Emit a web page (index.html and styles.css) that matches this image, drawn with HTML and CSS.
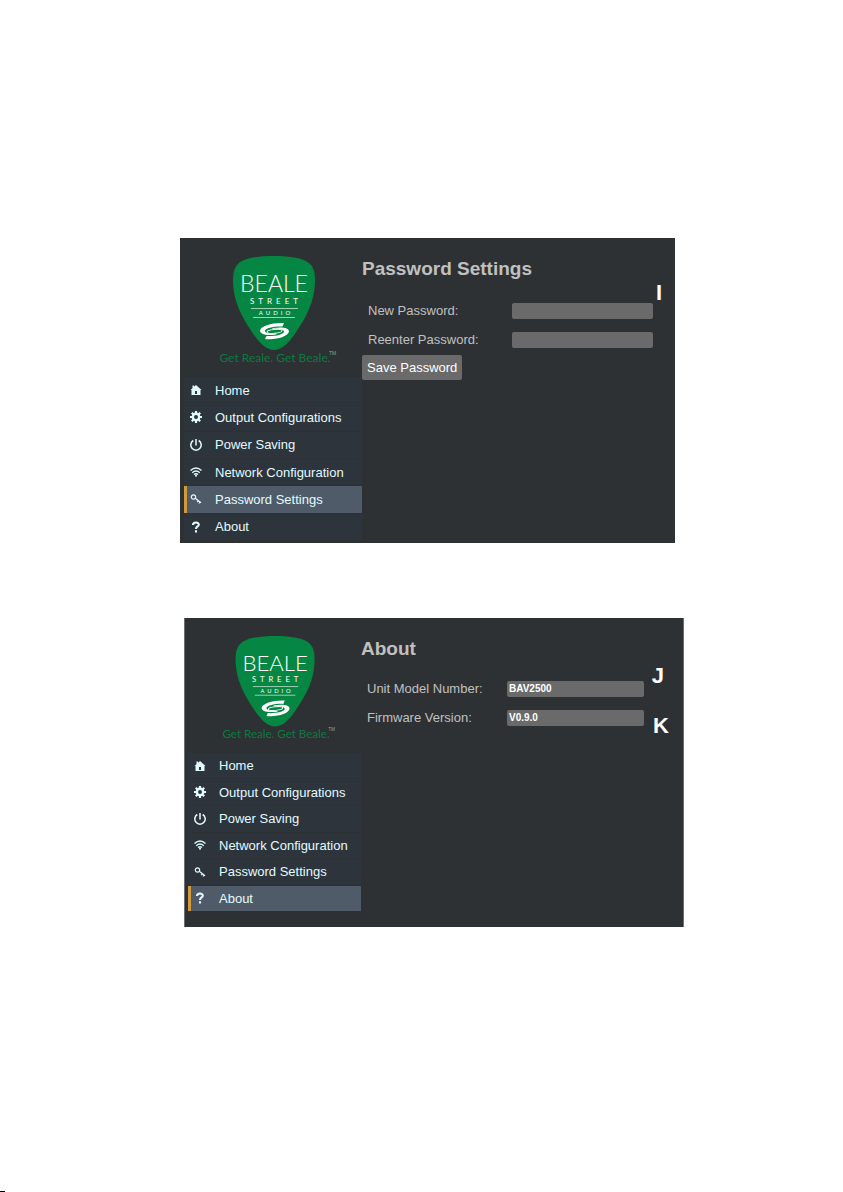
FILE: index.html
```html
<!DOCTYPE html>
<html lang="en">
<head>
  <meta charset="UTF-8">
  <meta name="viewport" content="width=device-width, initial-scale=1.0">
  <title>Beale Street Audio</title>
  <link rel="stylesheet" href="styles.css">
</head>
<body>
  <!-- shared menu icons and logo shapes -->
  <svg class="sprite" aria-hidden="true">
    <symbol id="pick" viewBox="0 0 120 112">
      <path class="pick" d="M57 2C41 2 27 4 21 10C17 14 16 20 16 26C16 42 21 55 28 67C37 82 46 96 57 96C68 96 77 82 86 67C93 55 98 42 98 26C98 20 97 14 93 10C87 4 73 2 57 2Z"/>
      <path class="logo-rule" d="M34 54.500H81M36 63.500H78"/>
      <path class="swoosh" d="M67 69C55 68.500 44 72 43 76.500C43 80 49 82 59 80.500L60 79.500C53 80.500 47.500 79 48 76.500C49 74 57 72 65.500 72.500Z"/>
      <path class="swoosh" d="M48 85C60 86 71 82.500 72 77.500C72 74 66 72.500 56 74L55 75C62 74 67.500 75.500 67 78C66 80.500 58 82.500 49.500 82Z"/>
      <ellipse class="swoosh-ring" cx="57.500" cy="77.300" rx="7.500" ry="1.900" transform="rotate(-5 57.500 77.300)"/>
    </symbol>
    <symbol id="home" viewBox="0 0 12 12">
      <path fill="currentColor" fill-rule="evenodd" d="M6 1L11.500 6H10.500V11H1.500V6H.500L2.500 4.200V1.500H4V2.800ZM5 7V10H7V7Z"/>
    </symbol>
    <symbol id="gear" viewBox="0 0 12 12">
      <circle cx="6" cy="6" r="3.200" fill="none" stroke="currentColor" stroke-width="2.400"/>
      <path stroke="currentColor" stroke-width="2.200" d="M6 0V2.500M6 9.500V12M0 6H2.500M9.500 6H12M1.800 1.800L3.500 3.500M8.500 8.500L10.200 10.200M10.200 1.800L8.500 3.500M3.500 8.500L1.800 10.200"/>
    </symbol>
    <symbol id="power" viewBox="0 0 12 12">
      <path fill="none" stroke="currentColor" stroke-width="1.500" d="M3.300 1.500A5.200 5.200 0 1 0 8.700 1.500M6 0V6.500"/>
    </symbol>
    <symbol id="wifi" viewBox="0 0 12 12">
      <path fill="none" stroke="currentColor" stroke-width="1.400" d="M.500 4.500Q6 -.300 11.500 4.500M2.200 6.700Q6 3.400 9.800 6.700M4 8.600Q6 6.800 8 8.600"/>
      <circle cx="6" cy="9.800" r="1" fill="currentColor"/>
    </symbol>
    <symbol id="key" viewBox="0 0 12 12">
      <circle cx="3.500" cy="4" r="2.200" fill="none" stroke="currentColor" stroke-width="1.200"/>
      <path fill="none" stroke="currentColor" stroke-width="1.200" d="M5.200 5.200L11 9.800M8.300 7.800L7.200 9.200M10 9L9 10.500"/>
    </symbol>
    <symbol id="help" viewBox="0 0 12 12">
      <path fill="none" stroke="currentColor" stroke-width="2.100" d="M3 4C3 .700 9 .700 8.800 3.700C8.700 5.600 6 5.300 6 8M6 9.300V11.500"/>
    </symbol>
  </svg>

  <main class="page">
    <section class="panel panel-password">
      <div class="sidebar">
        <svg class="logo" viewBox="0 0 120 112" role="img" aria-label="Beale Street Audio">
          <use href="#pick"/>
          <text class="logo-beale" x="57" y="38">BEALE</text>
          <text class="logo-street" x="59" y="50">STREET</text>
          <text class="logo-audio" x="59" y="61">AUDIO</text>
          <text class="logo-tag" x="58" y="108">Get Reale. Get Beale.</text>
          <text class="logo-tm" x="112" y="101">TM</text>
        </svg>
        <nav class="menu">
          <a href="#"><svg><use href="#home"/></svg>Home</a>
          <a href="#"><svg><use href="#gear"/></svg>Output Configurations</a>
          <a href="#"><svg><use href="#power"/></svg>Power Saving</a>
          <a href="#"><svg><use href="#wifi"/></svg>Network Configuration</a>
          <a href="#" class="active"><svg><use href="#key"/></svg>Password Settings</a>
          <a href="#"><svg><use href="#help"/></svg>About</a>
        </nav>
      </div>
      <form class="content">
        <h1>Password Settings</h1>
        <div class="field">
          <label for="new-password">New Password:</label>
          <input type="password" id="new-password">
        </div>
        <div class="field">
          <label for="reenter-password">Reenter Password:</label>
          <input type="password" id="reenter-password">
        </div>
        <button type="button" class="save">Save Password</button>
      </form>
      <span class="callout callout-i">I</span>
    </section>

    <section class="panel panel-about">
      <div class="sidebar">
        <svg class="logo" viewBox="0 0 120 112" role="img" aria-label="Beale Street Audio">
          <use href="#pick"/>
          <text class="logo-beale" x="57" y="38">BEALE</text>
          <text class="logo-street" x="59" y="50">STREET</text>
          <text class="logo-audio" x="59" y="61">AUDIO</text>
          <text class="logo-tag" x="58" y="108">Get Reale. Get Beale.</text>
          <text class="logo-tm" x="112" y="101">TM</text>
        </svg>
        <nav class="menu">
          <a href="#"><svg><use href="#home"/></svg>Home</a>
          <a href="#"><svg><use href="#gear"/></svg>Output Configurations</a>
          <a href="#"><svg><use href="#power"/></svg>Power Saving</a>
          <a href="#"><svg><use href="#wifi"/></svg>Network Configuration</a>
          <a href="#"><svg><use href="#key"/></svg>Password Settings</a>
          <a href="#" class="active"><svg><use href="#help"/></svg>About</a>
        </nav>
      </div>
      <form class="content">
        <h1>About</h1>
        <div class="field">
          <label for="model">Unit Model Number:</label>
          <input type="text" id="model" value="BAV2500" readonly>
        </div>
        <div class="field">
          <label for="firmware">Firmware Version:</label>
          <input type="text" id="firmware" value="V0.9.0" readonly>
        </div>
      </form>
      <span class="callout callout-j">J</span>
      <span class="callout callout-k">K</span>
    </section>

    <div class="footer-mark"></div>
  </main>
</body>
</html>
```
FILE: styles.css
```css
* {
  box-sizing: border-box;
}
body {
  margin: 0;
  background: #fff;
  font-family: "Liberation Sans", Arial, sans-serif;
  font-size: 13px;
}
.sprite {
  position: absolute;
  width: 0;
  height: 0;
}
.page {
  display: flex;
  flex-direction: column;
  min-height: 100vh;
  padding: 238px 159px 0 180px;
}

/* panels */
.panel {
  position: relative;
  display: grid;
  background: #2d3134;
}
.panel-password {
  grid-template-columns: 182px 1fr;
  margin-right: 9px;
  margin-bottom: 75px;
  padding-bottom: 3px;
}
.panel-about {
  grid-template-columns: 177px 1fr;
  margin-left: 4px;
  padding-bottom: 16px;
  box-shadow: inset 1px 0 #6d7072, inset -1px 0 #6d7072;
}
.sidebar {
  display: flex;
  flex-direction: column;
  padding: 16px 0 0 4px;
}

/* logo */
.logo {
  width: 120px;
  height: 112px;
  margin: 0 0 11px 33px;
}
.panel-about .logo {
  width: 116px;
  height: 108px;
  margin-left: 32px;
}
.pick {
  fill: #058743;
}
.logo-beale,
.logo-street,
.logo-audio,
.logo-tag {
  font-family: Lato, sans-serif;
  text-anchor: middle;
  fill: #fff;
}
.logo-beale {
  font-size: 23px;
  font-weight: 300;
}
.logo-street {
  font-size: 8px;
  letter-spacing: 4px;
}
.logo-audio {
  font-size: 6px;
  letter-spacing: 3px;
}
.logo-tag {
  font-size: 12px;
  fill: #0b7a40;
}
.logo-tm {
  font-size: 5px;
  fill: #7fa890;
}
.logo-rule {
  stroke: #9fd0b4;
}
.swoosh {
  fill: #fff;
}
.swoosh-ring {
  fill: none;
  stroke: #fff;
}

/* menu */
.menu {
  display: grid;
  grid-auto-rows: 1fr;
  gap: 1px;
  min-height: 163px;
}
.panel-about .menu {
  min-height: 158px;
}
.menu a {
  display: flex;
  align-items: center;
  gap: 13px;
  padding-left: 3px;
  border-left: 3px solid #2d343c;
  background: #2d343c;
  color: #e2fbff;
  text-decoration: none;
}
.menu a.active {
  border-left-color: #d19b3d;
  background: #4f5b69;
}
.menu svg {
  width: 12px;
  height: 12px;
}

/* content */
.content {
  padding: 20px 22px 0 0;
}
.panel-about .content {
  padding-right: 40px;
}
h1 {
  margin: 0 0 16px;
  color: #c0c0c0;
  font-size: 19px;
  line-height: 22px;
}
.panel-about h1 {
  margin-bottom: 14px;
}
.field {
  display: grid;
  grid-template-columns: 144px 1fr;
  align-items: center;
  height: 29px;
  padding-left: 6px;
  color: #c0c0c0;
}
.panel-about .field {
  grid-template-columns: 140px 1fr;
}
.field input {
  width: 100%;
  height: 16px;
  padding: 0 2px;
  border: 0;
  border-radius: 2px;
  background: #6a6a6a;
  color: #fff;
  font: bold 10px "Liberation Sans", Arial, sans-serif;
}
.save {
  height: 25px;
  margin-top: 1px;
  padding: 0 5px;
  border: 0;
  border-radius: 2px;
  background: #6a6a6a;
  color: #fff;
  font: 13px "Liberation Sans", Arial, sans-serif;
}

/* callout letters over the panels */
.callout {
  position: absolute;
  color: #fff;
  font-size: 22px;
  font-weight: bold;
  line-height: 24px;
}
.callout-i {
  top: 43px;
  right: 13px;
}
.callout-j {
  top: 46px;
  right: 20px;
}
.callout-k {
  top: 96px;
  right: 15px;
}
.footer-mark {
  width: 5px;
  height: 1px;
  margin-top: auto;
  margin-left: -180px;
  background: #000;
}
```
